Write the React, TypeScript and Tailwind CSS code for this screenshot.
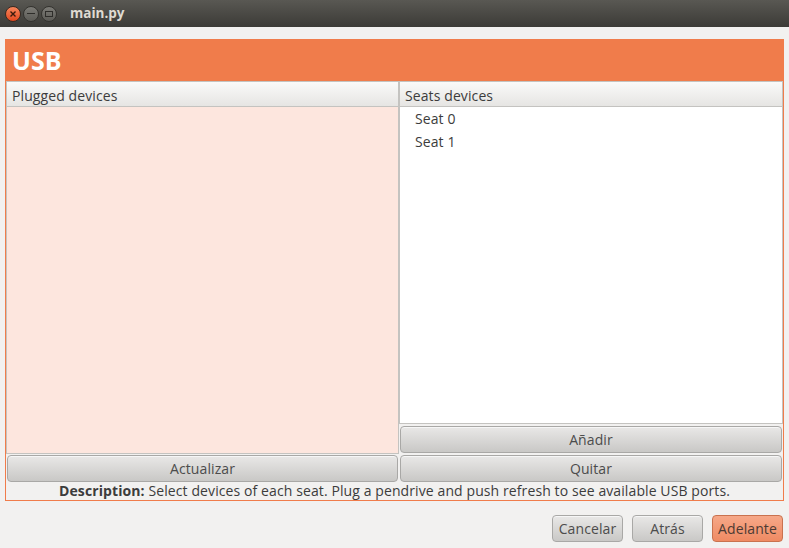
import React from "react";

const font = { fontFamily: '"Open Sans", "DejaVu Sans", sans-serif' };

function Btn({ children, className = "" }: { children: React.ReactNode; className?: string }) {
  return (
    <div
      className={
        "flex items-center justify-center rounded-[4px] border border-[#a9a8a6] bg-gradient-to-b from-[#e9e8e7] to-[#c9c8c6] text-[14px] tracking-[0.1px] text-[#4c4c4c] shadow-[inset_0_1px_0_#f6f6f6] " +
        className
      }
    >
      {children}
    </div>
  );
}

function ColHeader({ children }: { children: React.ReactNode }) {
  return (
    <div className="h-[26px] flex items-center pt-[2px] px-[5px] border border-[#c4c3c0] bg-gradient-to-b from-[#fafaf9] to-[#e6e5e3] text-[14px] tracking-[0.1px] text-[#3c3c3c]">
      {children}
    </div>
  );
}

export default function App() {
  return (
    <div className="w-[789px] h-[548px] bg-[#f2f1f0] flex flex-col overflow-hidden" style={font}>
      {/* title bar */}
      <div className="h-[27px] bg-gradient-to-b from-[#595853] to-[#3c3b37] flex items-center px-[5px]">
        <div className="flex items-center gap-[2px]">
          <div className="w-[16px] h-[16px] rounded-full bg-gradient-to-b from-[#f7855a] to-[#e2471c] border border-[#3a2a22] flex items-center justify-center">
            <svg width="8" height="8" viewBox="0 0 8 8">
              <path d="M1.5 1.5 L6.5 6.5 M6.5 1.5 L1.5 6.5" stroke="#3a1a0c" strokeWidth="1.4" />
            </svg>
          </div>
          <div className="w-[16px] h-[16px] rounded-full bg-gradient-to-b from-[#7c7b76] to-[#5c5b56] border border-[#34332f] flex items-center justify-center">
            <div className="w-[8px] h-[1.5px] bg-[#2e2d2a]" />
          </div>
          <div className="w-[16px] h-[16px] rounded-full bg-gradient-to-b from-[#7c7b76] to-[#5c5b56] border border-[#34332f] flex items-center justify-center">
            <div className="w-[8px] h-[6px] border border-[#2e2d2a]" />
          </div>
        </div>
        <div className="ml-[13px] text-[13.5px] font-bold text-[#dfdbd2]">main.py</div>
      </div>

      {/* content */}
      <div className="flex-1 flex flex-col px-[5px] pt-[12px]">
        <div className="h-[462px] border border-[#f07c4b] flex flex-col">
          <div className="h-[41px] bg-[#f07c4b] flex items-center px-[6px] text-[25px] font-bold text-white">USB</div>
          <div className="flex-1 flex">
            {/* left column */}
            <div className="w-[393px] flex flex-col">
              <ColHeader>Plugged devices</ColHeader>
              <div className="h-[347px] bg-[#fde6de] border-x border-b border-[#c4c3c0]" />
              <Btn className="mt-[1px] mx-[1px] h-[27px]">Actualizar</Btn>
            </div>
            {/* right column */}
            <div className="flex-1 flex flex-col">
              <ColHeader>Seats devices</ColHeader>
              <div className="h-[317px] bg-white border-x border-b border-[#c4c3c0] text-[14px] tracking-[0.1px] text-[#3c3c3c]">
                <div className="h-[23px] flex items-center pl-[15px]">Seat 0</div>
                <div className="h-[23px] flex items-center pl-[15px]">Seat 1</div>
              </div>
              <Btn className="mt-[2px] mx-[1px] h-[27px]">Añadir</Btn>
              <Btn className="mt-[2px] mx-[1px] h-[27px]">Quitar</Btn>
            </div>
          </div>
          <div className="h-[17px] flex items-center justify-center text-[14px] tracking-[0.1px] text-[#3c3c3c] leading-none pb-[1px]">
            <span className="font-bold">Description:</span>&nbsp;Select devices of each seat. Plug a pendrive and push refresh to see available USB ports.
          </div>
        </div>
        <div className="flex justify-end gap-[9px] mt-[14px] pr-[1px]">
          <Btn className="w-[71px] h-[27px]">Cancelar</Btn>
          <Btn className="w-[71px] h-[27px]">Atrás</Btn>
          <div className="w-[71px] h-[27px] flex items-center justify-center rounded-[4px] border border-[#c9724f] bg-gradient-to-b from-[#f6a888] to-[#ef8a63] text-[14px] tracking-[0.1px] text-[#4c3a33]">
            Adelante
          </div>
        </div>
      </div>
    </div>
  );
}
